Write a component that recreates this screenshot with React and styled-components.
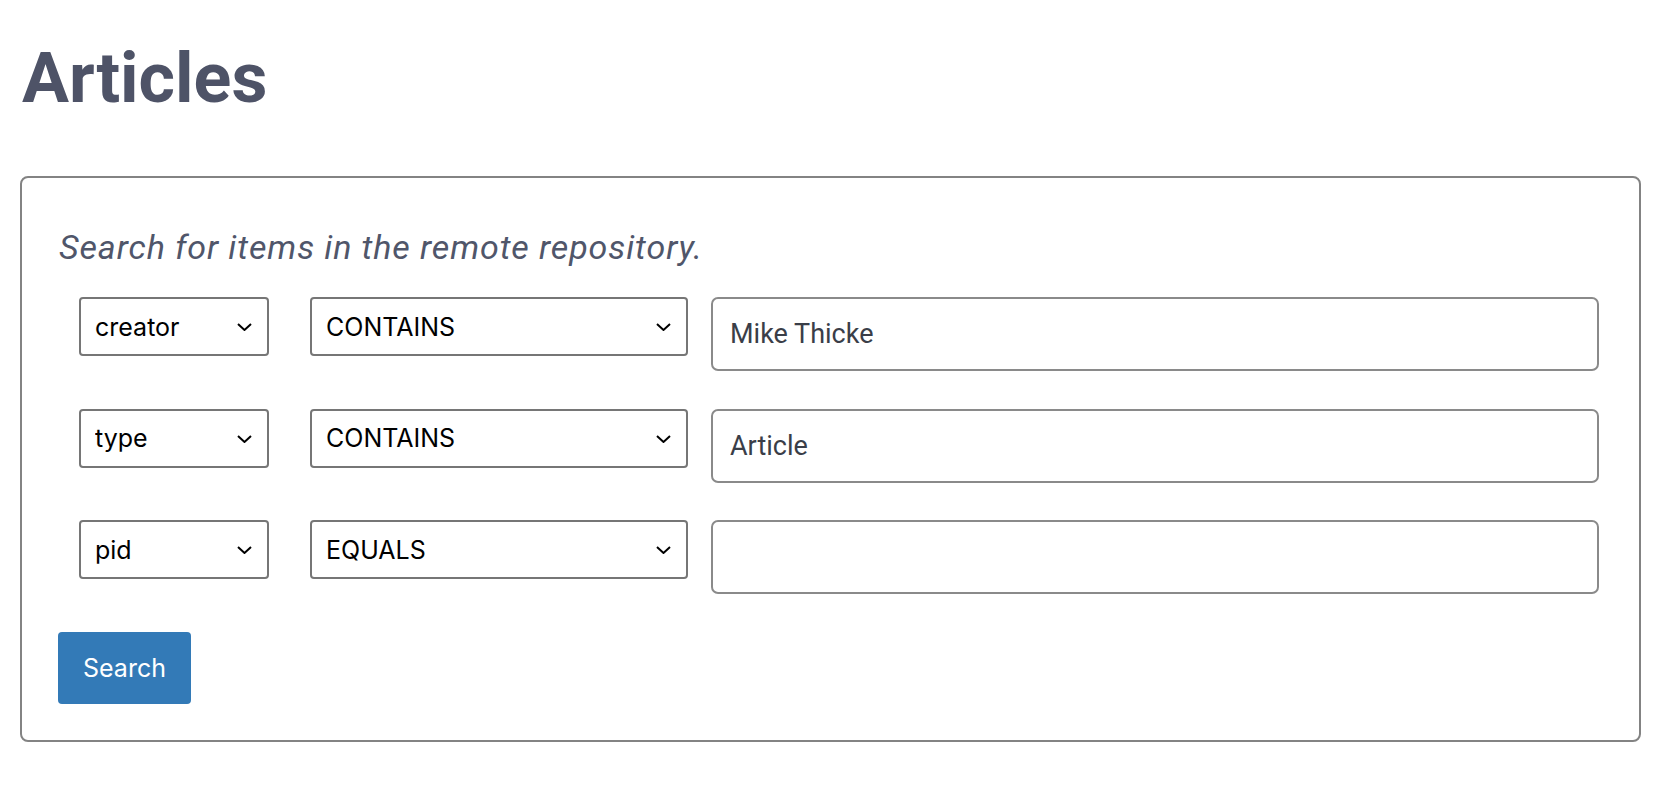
import React from 'react'
import styled, { createGlobalStyle } from 'styled-components'

const GlobalStyle = createGlobalStyle`
  body {
    margin: 0;
    background: #ffffff;
    font-family: Roboto, "Liberation Sans", sans-serif;
  }
`

const Page = styled.div`
  padding: 36px 23px 0 20px;
`
const Title = styled.h1`
  margin: 0 0 56px 2px;
  font-size: 70px;
  line-height: 84px;
  font-weight: 700;
  color: #4e5367;
`
const Panel = styled.form`
  border: 2px solid #838383;
  border-radius: 8px;
  padding: 44px 36px 36px 36px;
`
const Intro = styled.p`
  margin: 0 0 24px 1px;
  font-size: 34px;
  line-height: 51px;
  font-style: italic;
  letter-spacing: 0.9px;
  color: #50566a;
`
const Row = styled.div`
  display: flex;
  align-items: flex-start;
  padding: 0 4px 0 21px;
  margin-bottom: 37.5px;
`
const SelectWrap = styled.div`
  position: relative;
  flex: none;
  width: ${(props) => props.width}px;
  margin-right: ${(props) => props.gap}px;
`
const Select = styled.select`
  appearance: none;
  width: 100%;
  height: 59px;
  padding: 0 40px 0 14px;
  border: 2px solid #767676;
  border-radius: 4px;
  background: #ffffff;
  font-family: Inter, "Liberation Sans", sans-serif;
  font-size: 25px;
  color: #000000;
`
const Chevron = styled.svg`
  position: absolute;
  right: 17px;
  top: 26px;
  pointer-events: none;
`
const TextInput = styled.input`
  flex: 1;
  min-width: 0;
  height: 74px;
  box-sizing: border-box;
  padding: 0 17px;
  border: 2px solid #8a8a8a;
  border-radius: 7px;
  font-family: Roboto, sans-serif;
  font-size: 27px;
  color: #3a3e48;
`
const Button = styled.button`
  height: 72px;
  padding: 0 25px;
  border: none;
  border-radius: 4px;
  background-color: #337ab7;
  color: #ffffff;
  font-family: Inter, "Liberation Sans", sans-serif;
  font-size: 25px;
  cursor: pointer;
`

const fields = ['creator', 'type', 'pid']
const ops = ['CONTAINS', 'EQUALS']

const rows = [
  { field: 'creator', op: 'CONTAINS', value: 'Mike Thicke' },
  { field: 'type', op: 'CONTAINS', value: 'Article' },
  { field: 'pid', op: 'EQUALS', value: '' },
]

const Dropdown = ({ width, gap, value, options }) => (
  <SelectWrap width={width} gap={gap}>
    <Select defaultValue={value}>
      {options.map((o) => (
        <option key={o}>{o}</option>
      ))}
    </Select>
    <Chevron width="15" height="8" viewBox="0 0 15 8">
      <polyline points="1,1 7.5,7 14,1" fill="none" stroke="#000" strokeWidth="2" />
    </Chevron>
  </SelectWrap>
)

const App = () => {
  return (
    <Page>
      <GlobalStyle />
      <Title>Articles</Title>
      <Panel onSubmit={(e) => e.preventDefault()}>
        <Intro>Search for items in the remote repository.</Intro>
        {rows.map((r) => (
          <Row key={r.field}>
            <Dropdown width={190} gap={41} value={r.field} options={fields} />
            <Dropdown width={378} gap={23} value={r.op} options={ops} />
            <TextInput defaultValue={r.value} />
          </Row>
        ))}
        <Button type="submit">Search</Button>
      </Panel>
    </Page>
  )
}

export default App
